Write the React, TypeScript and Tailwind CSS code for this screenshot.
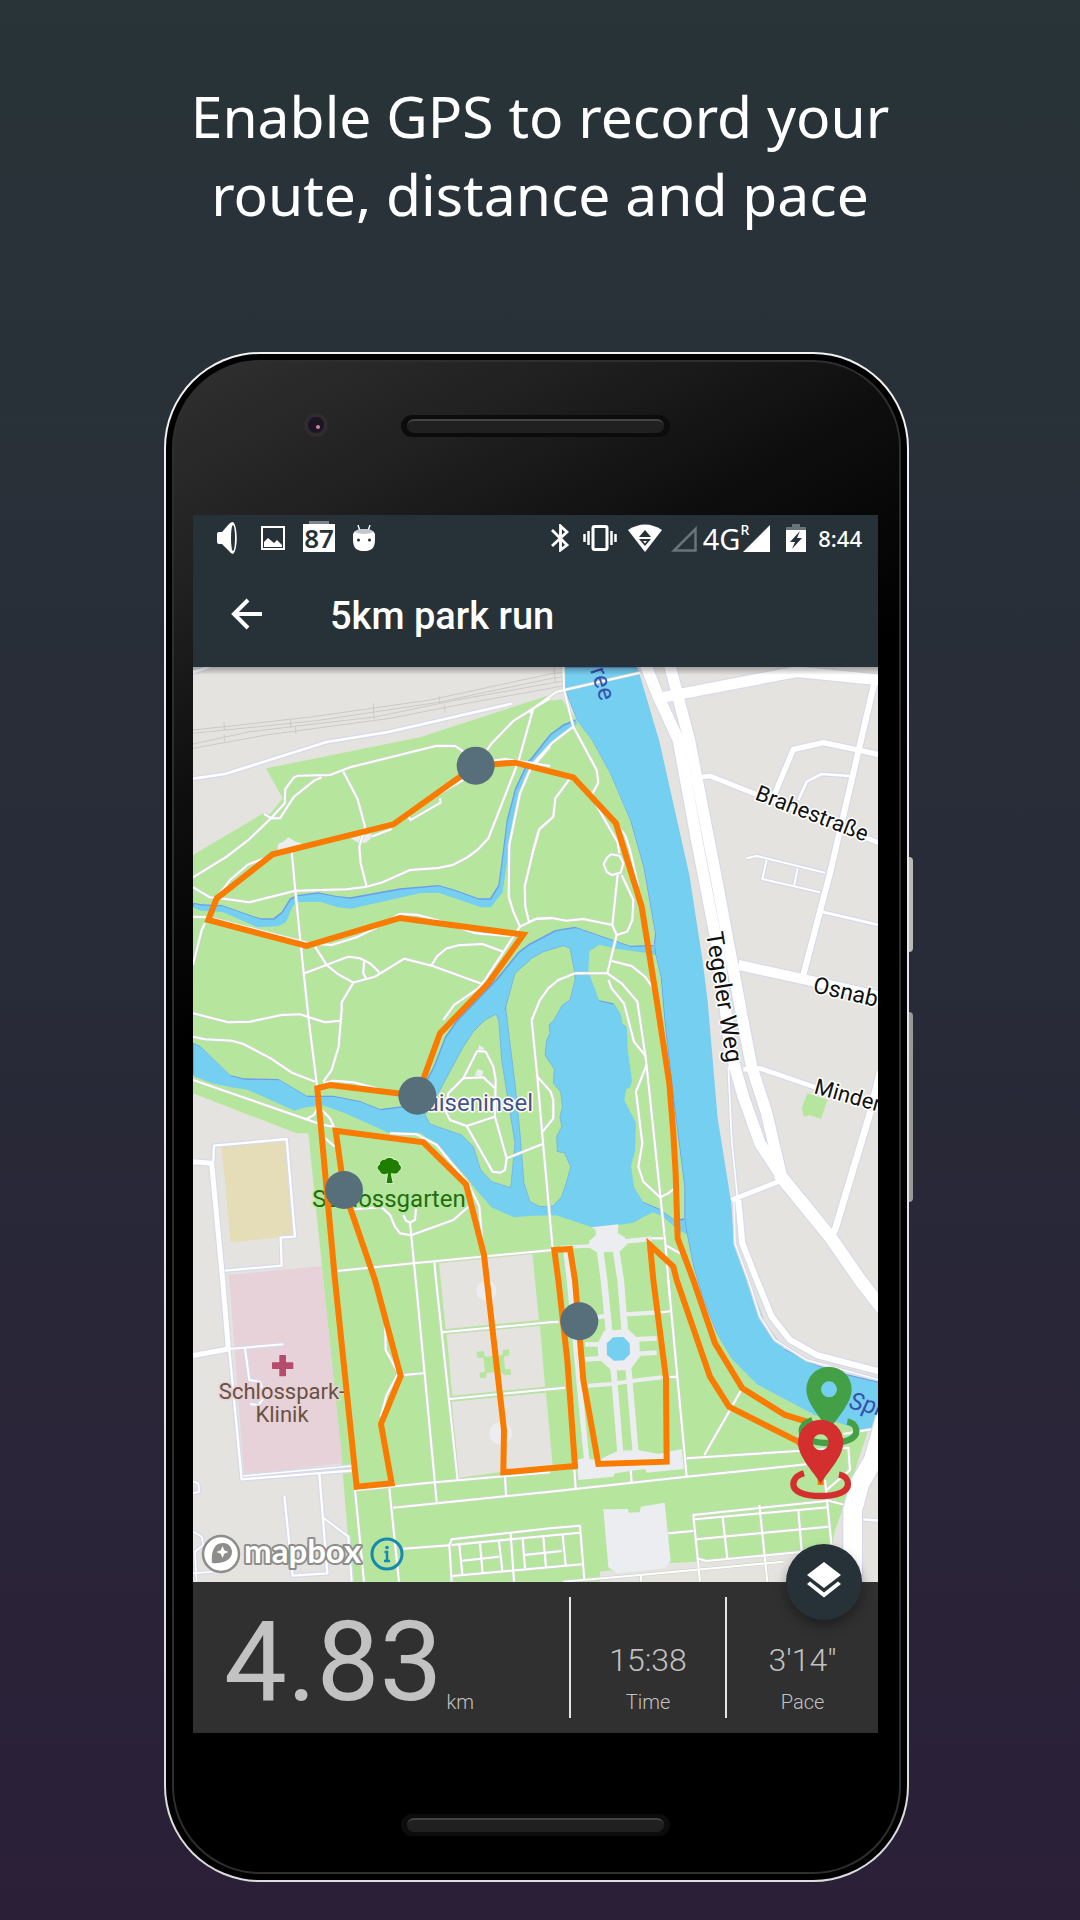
import React from "react";

/* The map is surveyed in six tiles; each tile maps local points to sheet units. */
const tile = (ox: number, oy: number) => (s: string) =>
  s
    .split(" ")
    .map((p) => {
      const [x, y] = p.split(",").map(Number);
      return `${x + ox},${y + oy}`;
    })
    .join(" ");

const A = tile(570, 1980);
const B = tile(1590, 1980);
const C = tile(570, 3000);
const D = tile(1590, 3000);
const E = tile(570, 3840);
const F = tile(1590, 3840);
const join = (...parts: string[]) => parts.join(" ");

const PAVED = "#ecedf1";
const WATER = "#75cff0";
const GREEN = "#b6e69e";
const LAND = "#e5e3df";

const riverBank = join(
  B("140,180 185,240 240,340 300,480 340,620 375,820 372,848 375,880 392,950 403,1080"),
  D("430,300 463,560 463,655 470,700 490,800 520,900"),
  F("560,160 605,235 680,310 850,400 985,445")
);

const park = join(
  A("9,585 220,460 240,462 278,415 228,325 690,232"),
  B("50,108 65,122 95,118"),
  riverBank,
  F("1012,458 985,540 945,670 915,750 905,800 500,845 410,850 210,875 210,905"),
  E("485,905 460,600 400,0"),
  C("355,400 320,400 9,280")
);

const spree = join(
  B("100,20 105,90"),
  riverBank,
  F("1045,450 1045,305 940,280 860,255 760,205 700,120 660,10"),
  D("610,730 600,600 560,350 530,0"),
  B("515,900 475,640 385,240 320,20")
);

const stream = join(
  B("137,178 100,193 60,222 0,298"),
  A("1015,300 975,385 950,480 935,600 925,675 900,715 865,715 790,688 745,675 630,685 480,712 440,708 385,697 320,705 300,715 275,755 250,775 210,775 95,735 35,733 9,728 9,740 30,748 95,752 200,798 260,795 285,783 305,735 320,722 390,722 440,738 480,742 690,695 745,695 870,738 900,738 935,692 950,590 965,480 1000,350 1040,295"),
  B("20,295 80,225 137,190")
);

const ponds = join(
  C("9,128 30,138 120,225 160,235 265,237 350,287 430,287 510,303 570,327 640,318 700,255 730,200 765,110"),
  A("800,1080 920,955 985,875 1025,845"),
  B("0,850 75,810 135,800 300,857 370,855 375,882 345,875 255,862 205,850 175,870 172,930 205,1020 250,1030 270,1060"),
  D("275,70 288,80 290,140 303,240 297,258 285,265 280,298 315,365 312,450 300,495 310,560 338,605 385,625 435,660 462,655 470,700 440,685 395,645 365,633 305,665 190,680 75,642 0,643"),
  C("970,648 905,620 860,570 830,530 760,455 690,395 600,398 540,370 460,335 395,312 345,318 310,328 170,265 120,258 60,245 9,225")
);

const westIsland = C(
  "918,43 885,60 850,95 820,140 750,270 705,345 720,372 815,405 850,440 872,510 905,545 962,563 975,430 935,180 926,60"
);

const eastIsland = join(
  B("0,898 40,875 100,857 120,865 133,930 135,960 120,1020 97,1035 72,1080"),
  D("57,75 60,100 50,120 45,165 73,208 70,250 92,275 97,320 90,350 95,380 80,410 82,455 103,458 122,500 110,545 95,590 70,618 30,620 0,605"),
  C("1002,550 990,400 975,250 960,130 947,20"),
  A("945,1050 975,940 1020,900")
);

const route = join(
  F("870,440 830,425 765,405 637,325 555,190 490,0"),
  D("443,715 437,520 430,400 418,250 380,0"),
  B("335,740 258,490 130,352"),
  A("975,308 857,317 610,493 248,583 80,715 55,780 350,858 630,774 1000,824 895,970"),
  C("750,100 682,287 420,255 382,265"),
  E("435,0 500,620 605,610 573,432 632,288 555,0"),
  C("462,570 437,392 700,427 828,553 882,765"),
  E("942,450 940,577"),
  F("135,558 112,240 85,0"),
  D("73,750 120,747"),
  F("135,0 160,300 205,552 410,545 408,295 370,0"),
  D("360,735 430,800"),
  F("440,0 540,290 597,380 805,485 872,560 872,615")
);

const rails = [
  join(A("9,210 150,195 370,170 720,120"), B("60,42 240,20")),
  join(A("9,220 380,182 740,128"), B("60,56 270,22")),
  join(A("9,252 180,215 560,170 800,120"), B("60,70 330,24")),
  join(A("9,265 230,225 600,175 830,130"), B("60,85 330,32")),
  A("102,187 103,210"), A("102,222 105,245"), A("301,178 303,202"), A("316,200 318,222"),
  A("550,130 551,155"), A("550,155 553,178"), A("747,108 750,132"), A("762,135 766,158"),
  B("72,22 76,66"),
];

const footpaths = [
  A("1080,115 1030,145 970,183 905,250 880,285"),
  A("1030,145 985,305 895,535 862,570 832,592 790,614 745,624 660,630 575,668 530,680 470,688 316,692 178,727 80,713 60,712 9,682"),
  A("820,275 796,258 740,257 480,322 420,345 325,347 312,352 286,387 284,430 240,478 175,540 110,590 9,652"),
  A("395,352 372,362 312,410 270,475 245,475 222,462"),
  A("460,335 503,418 525,500 508,560 512,610 530,680"),
  A("545,530 605,507"),
  A("820,360 750,400"),
  A("750,415 752,428 662,480 655,470"),
  join(A("305,575 316,692 335,880"), C("355,50 382,265")),
  A("905,303 945,297 1080,318"),
  A("80,713 120,660 175,613 250,585"),
  A("1080,260 1020,330 990,400 958,555 956,710 970,755 990,800"),
  A("1080,480 1047,508 1030,570 1004,680 1006,740 1018,790"),
  A("990,800 1040,776 1080,775"),
  A("9,770 55,772 350,848 380,852 425,855 500,832 555,805 630,762 680,764 740,780 850,818 880,822 960,828"),
  A("45,790 35,810 9,915"),
  A("990,800 885,960 865,985 792,1035 760,1080"),
  join(A("375,860 410,915 443,942 490,968 455,1027"), C("455,30 446,140 425,210 400,245")),
  A("343,940 475,890 510,895 540,910 568,937"),
  A("522,905 520,940 528,955"),
  A("490,968 555,950 643,896 725,917 880,973"),
  A("725,915 742,888 768,866 805,856 877,852 942,876"),
  B("0,160 10,145 80,95 330,38"),
  B("100,20 102,90 130,200 200,330 205,368 185,405"),
  B("130,200 65,250 10,310"),
  B("118,358 76,415 70,470 28,508 5,590"),
  B("190,420 262,545 268,580"),
  B("258,490 285,525 300,570 325,680"),
  B("243,583 268,587 280,610 272,638 245,645 230,635 221,612 232,592 243,583"),
  B("263,645 247,795 260,825 232,940 135,940 85,960 55,985 30,1020 5,1080"),
  B("275,645 310,720 307,780 292,815 260,825"),
  B("0,785 20,776 65,774 110,782 160,777 247,795"),
  B("245,903 305,918 345,950 370,985"),
  join(B("232,940 275,970 322,1025"), D("348,180 405,720 420,900")),
  join(B("235,960 245,985 282,1030"), D("312,125 348,170")),
  D("10,50 5,60 22,230 40,440 68,745"),
  D("22,230 62,275 70,300 70,355 38,395"),
  D("350,195 318,275 337,430 325,500 340,545 390,592 415,580 430,568"),
  D("405,735 450,760"),
  D("365,715 400,715"),
  C("9,40 115,67 180,65 275,45 330,43 405,67 450,62"),
  C("9,110 45,118 125,122 160,132 245,177 305,218 375,245"),
  C("400,250 430,242 490,247 560,265"),
  C("9,240 390,372 435,382"),
  C("345,360 372,345 382,325 395,330 420,355 432,382"),
  C("400,410 435,440"),
  C("862,152 887,155 910,200 917,240 915,350 950,475 945,510 932,518 908,515 830,378 780,360 765,330 775,280 820,235 862,152"),
  C("820,235 880,232 915,265"),
  C("830,378 915,350"),
  C("950,475 1058,432"),
  C("600,400 680,403 740,435 835,550 868,620 880,760"),
  C("490,628 575,622 600,645 615,680 630,700 662,706 790,660 835,620"),
  C("640,645 648,662 660,668 675,660 678,625"),
  join(C("660,668 683,900"), E("740,665")),
  C("440,813 670,790 1088,750"),
  join(C("733,785"), E("738,0 803,600")),
  E("755,157 1080,127 1105,125"),
  E("780,357 1125,323"),
  E("500,630 735,607 1080,577"),
  join(E("610,683 1080,635"), F("470,590 830,553")),
  E("640,285 700,280"),
  E("585,100 587,210 625,280 590,345 572,410"),
  E("495,630 522,905"),
  E("598,625 627,905"),
  E("640,806 778,796 785,905"),
  join(E("778,796 785,778 1080,745"), F("150,737 163,900")),
  join(E("785,795"), F("150,758")),
  join(E("787,888"), F("155,853")),
  E("808,795 817,882"),
  E("870,790 878,880"),
  E("927,785 937,872"),
  E("817,842 927,830"),
  E("962,760 972,905"),
  E("998,775 1005,865"),
  E("1003,825 1115,813"),
  E("1060,770 1068,862"),
  E("1118,765 1127,855"),
  E("945,588 948,645"),
  F("415,0 470,590"),
  F("385,98 420,94"),
  F("395,292 440,290"),
  F("470,535 955,503 960,570 890,630"),
  F("523,525 637,325"),
  F("302,570 305,607"),
  F("133,570 137,625"),
  F("940,462 1025,448"),
  F("885,600 905,800"),
  F("945,675 895,662 490,705 510,905"),
  F("495,718 895,682"),
  F("688,675 712,905"),
  F("500,778 895,740"),
  F("578,712 592,835"),
  F("805,690 815,815"),
  F("500,835 530,843 820,815"),
  F("415,760 490,753"),
  F("100,905 330,885 760,845"),
  F("333,885 333,905"),
];

const pavedWays: [string, number][] = [
  [D("90,742 180,738"), 10],
  [D("280,725 365,716"), 14],
  [join(D("210,750"), F("222,0 238,160")), 20],
  [join(D("258,750"), F("272,0 285,160")), 20],
  [join(D("108,755"), F("118,0 170,540")), 16],
  [F("250,260 272,530"), 18],
  [F("295,260 318,530"), 18],
  [F("165,193 210,193"), 14],
  [F("165,238 215,235"), 14],
  [F("315,178 380,175"), 14],
  [F("315,222 380,218"), 14],
  [F("165,318 245,312 305,303 395,292"), 12],
  [F("285,103 375,98"), 13],
  [F("200,112 225,108"), 13],
];

const roads: [string, number][] = [
  [A("9,356 105,342 410,246 595,216 965,131"), 8],
  [A("9,36 30,30 60,20"), 8],
  [B("650,595 680,588 885,638"), 6],
  [B("710,600 697,657 870,697"), 6],
  [B("803,625 793,675"), 6],
  [B("875,755 1045,795"), 8],
  [B("805,420 830,365 875,342 960,348"), 8],
  [B("735,400 790,268 880,248 985,270 1050,285"), 16],
  [B("1035,60 900,640 820,945"), 18],
  [B("480,355 540,348 1050,550"), 14],
  [B("400,112 800,35 1050,60"), 32],
  [B("625,915 830,960 1050,1010"), 30],
  [join(B("345,10 385,110 445,240 500,540 570,900"), D("600,150 640,290 690,430 755,530")), 34],
  [join(B("418,10 478,240 560,660 638,1080"), D("665,200 710,340 752,520")), 34],
  [D("640,208 690,205 850,260 1050,325"), 14],
  [D("1050,215 1020,340 915,690 905,705"), 20],
  [D("605,600 750,543"), 14],
  [D("595,200 605,420 622,590"), 5],
  [join(D("612,600 615,730"), F("655,0 690,110 735,180 830,240 1050,300")), 4],
  [join(D("625,600 637,730"), F("680,0 725,110 780,180 860,225 1050,275")), 18],
  [join(D("745,520 900,710"), F("990,0 1060,90")), 38],
  [F("1000,718 1050,722"), 7],
  [F("1070,400 1030,540 990,610 968,690 968,910"), 56],
  [C("70,485 72,437 290,417 315,710 272,713 275,797 105,812"), 7],
  [join(C("9,485 65,490"), E("98,0 115,205")), 15],
  [E("9,227 115,207"), 15],
  [E("115,207 280,193"), 6],
  [E("118,210 155,598 485,572"), 7],
  [E("160,588 485,558"), 5],
  [E("388,580 412,880 308,887 283,648"), 7],
  [E("398,712 475,770 485,905"), 6],
  [E("165,205 178,300 210,305 225,350 205,375 180,372"), 6],
  [E("9,880 70,875"), 5],
  [E("20,905 15,815 40,795 35,770 9,755"), 5],
  [E("9,605 25,610 28,635 9,640"), 5],
];

const Pin = ({ x, y, color }: { x: number; y: number; color: string }) => (
  <g transform={`translate(${x} ${y})`}>
    <path
      d="M-50 93 C-75 100 -82 115 -82 125 C-82 148 -50 161 0 161 C50 161 82 148 82 125 C82 115 75 100 55 97"
      fill="none"
      stroke={color}
      strokeWidth="19"
    />
    <path
      fillRule="evenodd"
      fill={color}
      d="M0 124 C-22 88 -68 44 -68 0 A68 68 0 1 1 68 0 C68 44 22 88 0 124 Z M0 -24 A24 24 0 1 0 0 24 A24 24 0 1 0 0 -24 Z"
    />
  </g>
);

const halo = "[paint-order:stroke] [stroke-linejoin:round] [stroke-width:3px]";

const ParkMap = () => (
  <svg viewBox="193 667 685 915" className="block w-full" role="img" aria-label="Map of the recorded route">
    <rect x="193" y="667" width="685" height="915" fill={LAND} />
    <g transform="scale(0.33333)" fill="none" strokeLinejoin="round">
      <polygon points={park} fill={GREEN} />
      <polygon points={D("832,280 892,300 873,357 838,345 822,350 815,325")} fill={GREEN} />
      <polygon points={C("95,440 285,425 310,708 122,727")} fill="#e4ddb8" />
      <polygon points={join(C("115,825 395,798"), E("458,550 162,585 118,0"))} fill="#e8d2da" />
      {rails.map((p) => (
        <polyline key={p} points={p} stroke="#cbcac6" strokeWidth="3" />
      ))}
      {[ponds, stream, spree].map((p) => (
        <g key={p}>
          <polygon points={p} fill="#6b9fec" />
          <polygon points={p} fill={WATER} transform="translate(3 4)" />
        </g>
      ))}
      {[westIsland, eastIsland].map((p) => (
        <polygon key={p} points={p} fill={GREEN} stroke="#6fa6ea" strokeWidth="2" />
      ))}
      <g fill={LAND}>
        <polygon points={join(C("747,790 1027,762"), E("1047,120 767,147"))} />
        <polygon points={E("770,163 1050,138 1065,320 787,347")} />
        <polygon points={E("785,365 1068,338 1088,555 808,593")} />
      </g>
      <g fill={PAVED}>
        <circle cx="1459" cy="3872" r="30" />
        <circle cx="1502" cy="4300" r="34" />
        <polygon points={A("262,570 264,552 280,545 295,532 318,546 335,550 330,570 262,580")} />
        <polygon points={A("482,535 545,520 543,535 528,548 505,548")} />
        <polygon points={C("868,135 882,145 880,160 860,158")} />
        <polygon points={C("862,208 880,212 876,230 854,226")} />
        <polygon points={D("185,682 265,673 264,700 285,712 290,735 268,755 200,757 176,742 178,722 198,705 197,690")} />
        <polygon points={F("140,540 160,535 205,540 265,512 325,510 385,522 455,507 462,567 350,578 345,567 255,580 250,590 145,600")} />
        <polygon points={F("220,688 293,687 297,698 330,696 332,680 404,668 422,843 405,865 262,880 235,862")} />
        <polygon points={F("222,152 295,148 328,180 330,230 300,270 245,272 205,235 203,190")} />
      </g>
      {pavedWays.map(([p, w]) => (
        <polyline key={p} points={p} stroke={PAVED} strokeWidth={w} />
      ))}
      <polygon points={F("250,172 280,171 299,190 300,222 282,241 252,242 231,225 230,190")} fill={WATER} />
      <polygon
        points={E("860,215 882,213 884,230 938,225 938,210 957,208 958,226 942,230 945,268 962,268 963,284 945,286 930,275 890,278 888,293 870,294 868,278 885,275 880,233 862,233")}
        fill={GREEN}
      />
      {footpaths.map((p) => (
        <polyline key={p} points={p} stroke="#cfd6cf" strokeWidth="10" />
      ))}
      {footpaths.map((p) => (
        <polyline key={p} points={p} stroke="#ffffff" strokeWidth="6" />
      ))}
      {roads.map(([p, w]) => (
        <polyline key={p} points={p} stroke="#d6d9ea" strokeWidth={w + 7} />
      ))}
      {roads.map(([p, w]) => (
        <polyline key={p} points={p} stroke="#ffffff" strokeWidth={w} />
      ))}
    </g>
    <g className={`${halo} font-['Roboto','Open_Sans',sans-serif] text-[24px]`} stroke="#ffffff">
      <text x="533" y="1111" textAnchor="end" fill="#46518a">Luiseninsel</text>
      <text x="389" y="1207" textAnchor="middle" fill="#1f6e0d" stroke="#b6e69e">Schlossgarten</text>
      <g fill="#6a5140" stroke="#e8d2da" className="text-[22px]" textAnchor="middle">
        <text x="282" y="1399">Schlosspark-</text>
        <text x="282" y="1422">Klinik</text>
      </g>
      <g fill="#111111">
        <text transform="translate(754 799) rotate(21)" className="text-[22px]">Brahestraße</text>
        <text transform="translate(706 933) rotate(81)">Tegeler Weg</text>
        <text transform="translate(812 992) rotate(13)" className="text-[23px]">Osnab</text>
        <text transform="translate(813 1093) rotate(16)" className="text-[22px]">Minder</text>
      </g>
      <g fill="#3a4fae" stroke="none">
        <text transform="translate(590 670) rotate(72)">ree</text>
        <text transform="translate(848 1408) rotate(14)" className="italic">Spr</text>
      </g>
    </g>
    <g transform="scale(0.33333)">
      <path
        d="M1160 3549 L1164 3520 C1152 3526 1140 3520 1139 3512 C1130 3506 1132 3496 1140 3494 C1138 3484 1150 3478 1155 3480 C1160 3472 1176 3472 1181 3480 C1190 3478 1198 3486 1197 3494 C1205 3498 1205 3508 1197 3512 C1194 3520 1184 3524 1174 3518 L1173 3526 L1178 3549 Z"
        stroke="#d2efc4"
        strokeWidth="6"
        fill="#1f7d00"
        className="[paint-order:stroke]"
      />
      <path
        d="M840 4067 h16 v22 h22 v16 h-22 v22 h-16 v-22 h-22 v-16 h22 z"
        fill="#b54b6d" stroke="#b54b6d" strokeWidth="4" strokeLinejoin="round"
      />
      <polyline points={route} fill="none" stroke="#f97c00" strokeWidth="18" strokeLinejoin="miter" />
      <g fill="#566f7b">
        <circle cx="1427" cy="2297" r="57" />
        <circle cx="1252" cy="3287" r="57" />
        <circle cx="1032" cy="3570" r="57" />
        <circle cx="1738" cy="3964" r="57" />
      </g>
      <Pin x={2487} y={4168} color="#43a047" />
      <Pin x={2462} y={4327} color="#d32f2f" />
    </g>
  </svg>
);

const StatusBar = () => (
  <div className="flex h-[46px] items-center justify-between pl-6 pr-4 text-white">
    <div className="flex items-center">
      <svg viewBox="0 0 20 32" className="h-8 w-5" fill="#fff">
        <path d="M0 12 Q0 10 2 10 H5 L12 2 Q14 0 16 0 C21 4 21 28 16 32 Q14 32 12 29 L5 22 H2 Q0 22 0 20 Z" />
        <ellipse cx="16" cy="16" rx="2" ry="13" fill="#263238" />
      </svg>
      <svg viewBox="0 0 24 24" className="ml-6 h-6 w-6">
        <rect x="1" y="1" width="22" height="22" fill="none" stroke="#fff" strokeWidth="2" />
        <path d="M3 21 V16 L7 12 L13 17 L16 14 L21 19 V21 Z" fill="#fff" />
      </svg>
      <div className="relative ml-[18px] flex h-7 w-8 items-center justify-center bg-white">
        <span className="absolute -top-[3px] left-1.5 h-[3px] w-5 bg-[#7d8588]" />
        <span className="font-['Noto_Sans',sans-serif] text-[26px] leading-7 font-semibold text-[#263238]">87</span>
      </div>
      <svg viewBox="0 0 22 26" className="ml-[18px] h-[26px] w-[22px]">
        <path d="M5 0 L7 6 M17 0 L15 6" stroke="#fff" strokeWidth="1.4" />
        <path d="M0 9 Q2 4 11 4 Q20 4 22 9 V14 C22 24 18 26 11 26 C4 26 0 24 0 14 Z" fill="#fff" />
        <path d="M1 7 Q4 4 11 4 Q18 4 21 7 Q11 11 1 7 Z" fill="#c3c8cb" />
        <circle cx="5.500" cy="15" r="1.500" fill="#263238" />
        <circle cx="16.500" cy="15" r="1.500" fill="#263238" />
      </svg>
    </div>
    <div className="flex items-center">
      <svg viewBox="0 0 18 28" className="h-7 w-[18px]" fill="none" stroke="#fff" strokeWidth="2.800">
        <path d="M1 6 L16 21 L9.500 26 V2 L16 8 L1 22" />
      </svg>
      <svg viewBox="0 0 34 26" className="ml-[14px] h-[26px] w-[34px]" fill="none" stroke="#fff" strokeWidth="2.500">
        <rect x="10" y="1.500" width="14" height="23" rx="1.500" strokeWidth="3" />
        <path d="M1.500 9 V17 M5.500 6 V20 M28.500 6 V20 M32.500 9 V17" />
      </svg>
      <svg viewBox="0 0 34 28" className="ml-[11px] h-7 w-[34px]">
        <path d="M0 6 Q17 -5 34 6 L17 28 Z" fill="#fff" />
        <path d="M11 13 L17 6 L23 13 Z M11 15 H23 L17 22 Z" fill="#263238" />
        <path d="M15 17 H19 L17 19.500 Z" fill="#fff" />
      </svg>
      <svg viewBox="0 0 27 27" className="ml-2 h-[27px] w-[27px]">
        <path d="M4 25.500 H25.500 V4 Z" fill="none" stroke="#68737a" strokeWidth="2.500" />
      </svg>
      <span className="ml-1.5 font-['Noto_Sans',sans-serif] text-[29px] leading-none">4G</span>
      <span className="mb-4 font-['Noto_Sans',sans-serif] text-[14px] leading-none font-medium">R</span>
      <svg viewBox="0 0 27 27" className="-ml-1.5 h-[27px] w-[27px]">
        <path d="M0 27 H27 V0 Z" fill="#fff" />
      </svg>
      <svg viewBox="0 0 20 28" className="ml-4 h-7 w-5">
        <path d="M6 0 H14 V3 H20 V6 H0 V3 H6 Z" fill="#68737a" />
        <path d="M0 6 H20 V28 H0 Z" fill="#fff" />
        <path d="M14 7 L4 18 H9 L6 25 L16 14 H11 Z" fill="#263238" />
      </svg>
      <span className="ml-3 font-['Noto_Sans',sans-serif] text-[22px] leading-none font-medium">8:44</span>
    </div>
  </div>
);

const Slot = () => (
  <div className="h-[22px] w-[269px] rounded-full bg-[#0c0c0c] px-1.5 py-1">
    <div className="h-3.5 rounded-full border-t-2 border-[#444] bg-[#202020]" />
  </div>
);

export default function App() {
  return (
    <main className="min-h-[1920px] bg-linear-to-b from-[#283438] via-[#282b38] to-[#2a1f37] pt-[77px] pb-9 font-['Roboto',sans-serif]">
      <h1 className="mx-auto max-w-[760px] text-center font-['Noto_Sans',sans-serif] text-[57px] leading-[78px] text-white">
        Enable GPS to record your route, distance and pace
      </h1>

      <div className="pt-[119px] pr-[171px] pl-[164px]">
        <div className="relative rounded-[96px] bg-linear-to-b from-[#f2f2f2] to-[#dcdcdc] p-[2px]">
          <span className="absolute top-[505px] -right-1 h-[95px] w-1 rounded-r-sm bg-[#b9b9b9]" />
          <span className="absolute top-[660px] -right-1 h-[190px] w-1 rounded-r-sm bg-[#999]" />
          <div className="rounded-[94px] bg-black p-[6px]">
            <div className="rounded-[88px] border-2 border-[#2e2e2e] bg-[linear-gradient(150deg,#303030_0%,#202020_12%,#0e0e0e_23%,#000_36%)] pr-[21px] pl-[19px]">
              <div className="relative flex h-[153px] items-center justify-center pb-[26px]">
                <span className="absolute top-[51px] left-[111px] flex h-6 w-6 items-center justify-center rounded-full bg-[#2f2c2e]">
                  <span className="flex h-4 w-4 items-end justify-end rounded-full bg-[#1d1526] p-1">
                    <span className="h-1 w-1 rounded-full bg-[#c98a94]" />
                  </span>
                </span>
                <Slot />
              </div>

              <section className="bg-[#263238]">
                <header className="h-[152px]">
                  <StatusBar />
                  <div className="flex h-[106px] items-center pl-9">
                    <button type="button" aria-label="Back" className="h-9 w-9">
                      <svg viewBox="0 0 36 36" className="h-9 w-9" fill="none" stroke="#fff" strokeWidth="4">
                        <path d="M33 18 H5 M19 4 L5 18 L19 32" />
                      </svg>
                    </button>
                    <h2 className="ml-[65px] pt-1 text-[38px] leading-none font-medium text-white">5km park run</h2>
                  </div>
                </header>

                <div className="relative overflow-hidden">
                  <ParkMap />
                  <span className="absolute inset-x-0 top-0 h-2 bg-linear-to-b from-black/30 to-transparent" />
                  <div className="absolute bottom-2 left-2 flex items-center">
                    <a href="#mapbox" aria-label="Mapbox" className="block">
                      <svg viewBox="0 0 164 40" className="h-10 w-[164px]">
                        <circle cx="20" cy="20" r="18" fill="#fff" stroke="#8d8d8b" strokeWidth="2.500" />
                        <path d="M11 29 C10 20 12 9 22 9 C28 9 31 14 31 18 C31 27 20 30 11 29 Z" fill="#8d8d8b" />
                        <path d="M21.500 12 L23.300 16.200 L27.500 18 L23.300 19.800 L21.500 24 L19.700 19.800 L15.500 18 L19.700 16.200 Z" fill="#fff" />
                        <text x="43" y="29" fill="#fff" stroke="#8d8d8b" className="font-['Lato',sans-serif] text-[33px] font-bold [paint-order:stroke] [stroke-linejoin:round] [stroke-width:4px]">
                          mapbox
                        </text>
                      </svg>
                    </a>
                    <button type="button" aria-label="Map information" className="ml-1 h-9 w-9">
                      <svg viewBox="0 0 36 36" className="h-9 w-9" fill="none" stroke="#1689b0">
                        <circle cx="18" cy="18" r="15" strokeWidth="3" />
                        <path d="M15.500 16 H18 V25 M15 25 H21" strokeWidth="2.500" />
                        <circle cx="18" cy="11.500" r="1.800" fill="#1689b0" stroke="none" />
                      </svg>
                    </button>
                  </div>
                </div>

                <div className="relative flex h-[151px] items-stretch bg-[#303030] py-[15px] text-[#c2c2c2]">
                  <div className="flex flex-1 items-end pl-[31px]">
                    <span className="text-[112px] leading-[113px]">4.83</span>
                    <span className="ml-1 pb-1 text-[20px] leading-6 font-light">km</span>
                  </div>
                  <dl className="flex w-[156px] flex-col-reverse items-center border-l-2 border-[#e4e4e4] pb-1">
                    <dt className="text-[20px] leading-6 font-light">Time</dt>
                    <dd className="mb-2.5 text-[32px] leading-10 font-light">15:38</dd>
                  </dl>
                  <dl className="flex w-[153px] flex-col-reverse items-center border-l-2 border-[#e4e4e4] pb-1">
                    <dt className="text-[20px] leading-6 font-light">Pace</dt>
                    <dd className="mb-2.5 text-[32px] leading-10 font-light">3'14"</dd>
                  </dl>
                  <button
                    type="button"
                    aria-label="Map layers"
                    className="absolute -top-[38px] right-4 flex h-[76px] w-[76px] items-center justify-center rounded-full bg-[#263238] shadow-[0_6px_12px_rgba(0,0,0,0.35)]"
                  >
                    <svg viewBox="0 0 36 40" className="h-10 w-9" fill="#fff">
                      <path d="M18 0 L35 13 L18 26 L1 13 Z" />
                      <path d="M1 22 L4 19.500 L18 30.500 L32 19.500 L35 22 L18 35.500 Z" />
                    </svg>
                  </button>
                </div>
              </section>

              <div className="flex h-[139px] items-end justify-center pb-9">
                <Slot />
              </div>
            </div>
          </div>
        </div>
      </div>
    </main>
  );
}
